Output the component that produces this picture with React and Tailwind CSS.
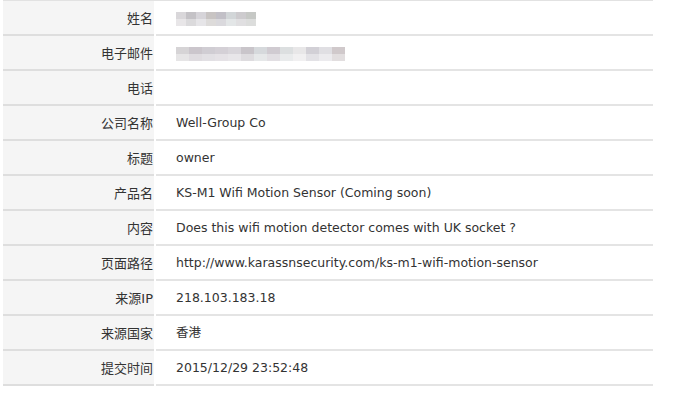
import React from "react";

const rows = [
  { label: "姓名", blur: "name" },
  { label: "电子邮件", blur: "email" },
  { label: "电话", value: "" },
  { label: "公司名称", value: "Well-Group Co" },
  { label: "标题", value: "owner" },
  { label: "产品名", value: "KS-M1 Wifi Motion Sensor (Coming soon)" },
  { label: "内容", value: "Does this wifi motion detector comes with UK socket ?" },
  { label: "页面路径", value: "http://www.karassnsecurity.com/ks-m1-wifi-motion-sensor" },
  { label: "来源IP", value: "218.103.183.18" },
  { label: "来源国家", value: "香港" },
  { label: "提交时间", value: "2015/12/29 23:52:48" },
];

const nameBlur = ["#d9d7da", "#c4c2c6", "#d6d4d9", "#c8c4c3", "#c2c0c7", "#d2d6d8", "#cdcbce", "#c6c8c5"];
const emailBlur = ["#d6d4d6", "#cbc6cc", "#d0cdd3", "#d4d0d6", "#d9d6db", "#c9c5ca", "#d6d9dc", "#d0cbd1", "#dcdfe0", "#e8e7e8", "#d2d0d6", "#e0dfe3", "#d0c9cb"];

function Blur({ colors, wide }) {
  return (
    <div className="flex flex-col">
      <div className="flex">
        {colors.map((c, i) => (
          <div key={i} className={wide ? "w-[13px] h-[7px]" : "w-[10px] h-[7px]"} style={{ background: c }} />
        ))}
      </div>
      <div className="flex opacity-60">
        {colors.map((c, i) => (
          <div key={i} className={wide ? "w-[13px] h-[7px]" : "w-[10px] h-[7px]"} style={{ background: c }} />
        ))}
      </div>
    </div>
  );
}

export default function App() {
  return (
    <div className="w-[700px] h-[415px] bg-white" style={{ fontFamily: "'DejaVu Sans', 'Noto Sans CJK SC', sans-serif" }}>
      <div className="ml-[3px] w-[650px] border-t border-[#e2e2e2]">
        {rows.map((r) => (
          <div key={r.label} className="grid grid-cols-[151px_497px] gap-x-[2px] h-[35px]">
            <div className="bg-[#f5f5f5] border-b-2 border-[#dedede] flex items-center justify-end pr-[1px] pt-[2px] text-[13px] text-[#333]">
              {r.label}
            </div>
            <div className="border-b-2 border-[#e4e4e4] flex items-center pl-[20px] pt-[2px] text-[12.5px] text-[#333]">
              {r.blur === "name" && <Blur colors={nameBlur} />}
              {r.blur === "email" && <Blur colors={emailBlur} wide />}
              {r.value}
            </div>
          </div>
        ))}
      </div>
    </div>
  );
}
